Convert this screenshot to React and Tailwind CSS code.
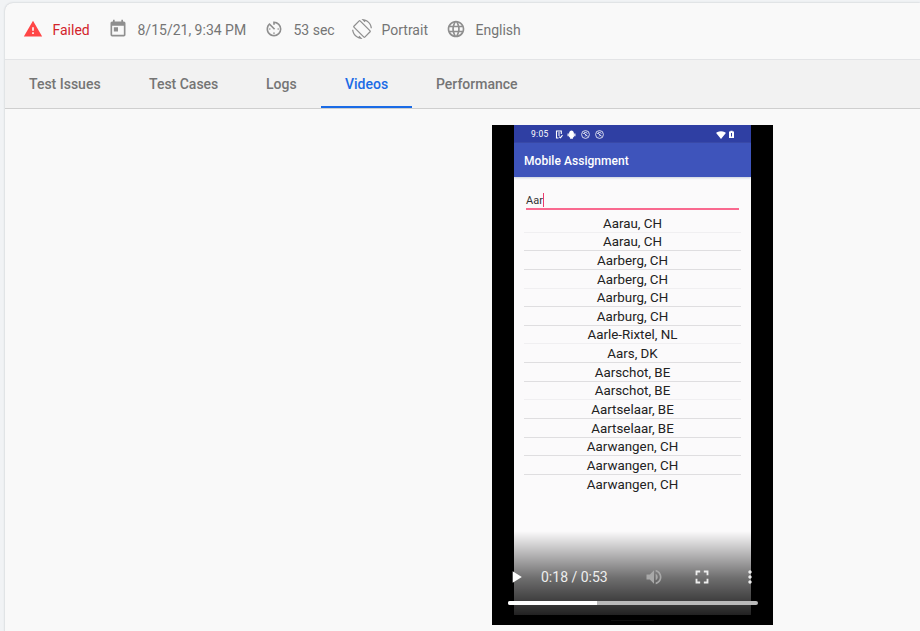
import {
  MdAvTimer,
  MdFullscreen,
  MdLanguage,
  MdMoreVert,
  MdPlayArrow,
  MdScreenRotation,
  MdSignalWifi4Bar,
  MdToday,
  MdVolumeUp,
  MdWarning,
} from "react-icons/md";

const tabs = [
  { label: "Test Issues", width: "w-[120px]" },
  { label: "Test Cases", width: "w-[117px]" },
  { label: "Logs", width: "w-[79px]" },
  { label: "Videos", width: "w-[91px]", active: true },
  { label: "Performance", width: "w-[130px]" },
];

const cities = [
  "Aarau, CH",
  "Aarau, CH",
  "Aarberg, CH",
  "Aarberg, CH",
  "Aarburg, CH",
  "Aarburg, CH",
  "Aarle-Rixtel, NL",
  "Aars, DK",
  "Aarschot, BE",
  "Aarschot, BE",
  "Aartselaar, BE",
  "Aartselaar, BE",
  "Aarwangen, CH",
  "Aarwangen, CH",
  "Aarwangen, CH",
];

function RunSummary() {
  return (
    <header className="flex h-[57px] items-center border-b border-[#e3e4e6] pb-0.5 pl-[18px] text-sm text-[#757575]">
      <div className="flex w-[85px] items-center text-[#d3242b]">
        <MdWarning className="mr-[9.5px] size-5 -translate-y-px text-[#ff4646]" />
        Failed
      </div>
      <div className="flex w-[156px] items-center">
        <MdToday className="mr-[9.5px] size-5 -translate-y-px text-[#8f8f8f]" />
        8/15/21, 9:34 PM
      </div>
      <div className="flex w-[88px] items-center">
        <MdAvTimer className="mr-[9.5px] size-5 -translate-y-px text-[#8f8f8f]" />
        53 sec
      </div>
      <div className="flex w-[94px] items-center">
        <MdScreenRotation className="mr-[9.5px] size-5 -translate-y-px text-[#8f8f8f]" />
        Portrait
      </div>
      <div className="flex items-center">
        <MdLanguage className="mr-[9.5px] size-5 -translate-y-px text-[#8f8f8f]" />
        English
      </div>
    </header>
  );
}

function TabBar() {
  return (
    <nav className="flex h-[49px] border-b border-[#cfcfcf] bg-[#f2f2f2] text-sm font-medium text-[#757575]">
      {tabs.map((tab) => (
        <div
          key={tab.label}
          className={`flex h-12 shrink-0 items-center whitespace-nowrap pl-6 ${tab.width} ${
            tab.active ? "border-b-2 border-[#1a6be6] pt-0.5 text-[#1a6be6]" : ""
          }`}
        >
          {tab.label}
        </div>
      ))}
    </nav>
  );
}

function NotificationRing() {
  return (
    <svg viewBox="0 0 9 9" className="mr-[5px] size-[9px]" fill="none" stroke="currentColor">
      <circle cx="4.5" cy="4.5" r="3.9" strokeWidth="0.8" />
      <path d="M2.4 4C3 2 5.8 2 6.3 3.6M3.2 3.4 6.6 6.2M4.2 6.4 5.2 5.2" strokeWidth="0.9" />
    </svg>
  );
}

function StatusBar() {
  return (
    <div className="flex h-[18px] items-center bg-[#2f3fa3] pl-[17px] pr-[11px] pt-px text-white">
      <span className="w-[24px] text-[8.5px] leading-none tracking-[0.3px]">9:05</span>
      <svg viewBox="0 0 8 9" className="mr-1 h-[9px] w-2" fill="none" stroke="currentColor">
        <path d="M6.3 4V1H1.5V8H3.5M3 3H5M3 5H5M4.2 6.8 5.5 7.8 7.5 5.2" strokeWidth="1.1" />
      </svg>
      <svg viewBox="0 0 10 10" className="mr-[5px] size-[9px]" fill="currentColor">
        <path d="M2.3 3.6C2.6 1.6 3.6.6 5 .6S7.4 1.6 7.7 3.6ZM2.3 3.6H7.7V8H6.6V9.7H3.4V8H2.3ZM.6 4H2V7H.6ZM8 4H9.4V7H8Z" />
      </svg>
      <NotificationRing />
      <NotificationRing />
      <MdSignalWifi4Bar className="ml-auto mr-[2px] size-[10px]" />
      <svg viewBox="0 0 7 9" className="mr-[5px] h-[9px] w-[7px]" fill="currentColor" fillRule="evenodd">
        <path d="M1 1.5H2.4V.7H4.6V1.5H6V8H1ZM3 3V6.5H4V3Z" />
      </svg>
    </div>
  );
}

function PhoneScreen() {
  return (
    <div className="mx-auto h-[490px] w-[237px] overflow-hidden bg-[#fbfafb]">
      <StatusBar />
      <div className="flex h-[34px] items-center bg-[#3e54bb] pl-[10px] pt-0.5 text-[12px] font-medium tracking-[0.05px] text-white shadow-[0_1px_2px_#c8d0dc]">
        Mobile Assignment
      </div>
      <div className="ml-3 mt-[15px] flex h-[18px] w-[213px] items-center border-b-2 border-[#f9698f] text-[11px] text-[#333]">
        <span className="w-[17px] pt-0.5">Aar</span>
        <span className="h-3.5 w-px bg-[#ec3c6d]" />
      </div>
      <ul className="mx-[10px] mt-1 text-[13.35px] text-[#222]">
        {cities.map((city, i) => (
          <li
            key={i}
            className={`flex h-[18.65px] items-center justify-center border-b pt-px leading-none last:border-transparent ${
              i % 3 === 0 && i < 12 ? "border-[#f0eff1]" : "border-[#dfdee0]"
            }`}
          >
            {city}
          </li>
        ))}
      </ul>
    </div>
  );
}

function PlayerControls() {
  return (
    <div className="absolute inset-x-0 bottom-0 flex h-[94px] flex-col bg-linear-to-b from-transparent via-black/56 via-50% to-black/95 px-4 text-white">
      <div className="mt-[33px] flex h-[26px] items-center">
        <MdPlayArrow className="-ml-0.5 size-[20px] shrink-0" />
        <span className="ml-[15px] w-[103px] shrink-0 text-sm text-[#eee]">0:18 / 0:53</span>
        <MdVolumeUp className="size-5 shrink-0 text-[#a8a8a8]" />
        <MdFullscreen className="ml-[27px] size-[22px] shrink-0 text-[#eee]" />
        <MdMoreVert className="-mr-3 ml-[27px] size-5 shrink-0 text-[#eee]" />
      </div>
      <div className="mt-[11px] h-1 w-[250px] overflow-hidden rounded-full bg-[#b9b9b9]">
        <div className="h-full w-[89px] bg-white" />
      </div>
      <div className="mx-auto mt-[15px] h-px w-[43px] bg-[#0e0e0e]" />
    </div>
  );
}

export default function App() {
  return (
    <div className="h-[631px] w-[920px] overflow-hidden bg-[#f1f3f5] pl-[5px] pt-[3px] font-[Roboto,sans-serif]">
      <main className="h-[640px] rounded-tl-lg bg-[#f9f9f9] shadow-[0_0_2px_#b5b9be]">
        <RunSummary />
        <TabBar />
        <section className="relative ml-[487px] mt-4 h-[500px] w-[281px] bg-black">
          <PhoneScreen />
          <PlayerControls />
        </section>
      </main>
    </div>
  );
}
